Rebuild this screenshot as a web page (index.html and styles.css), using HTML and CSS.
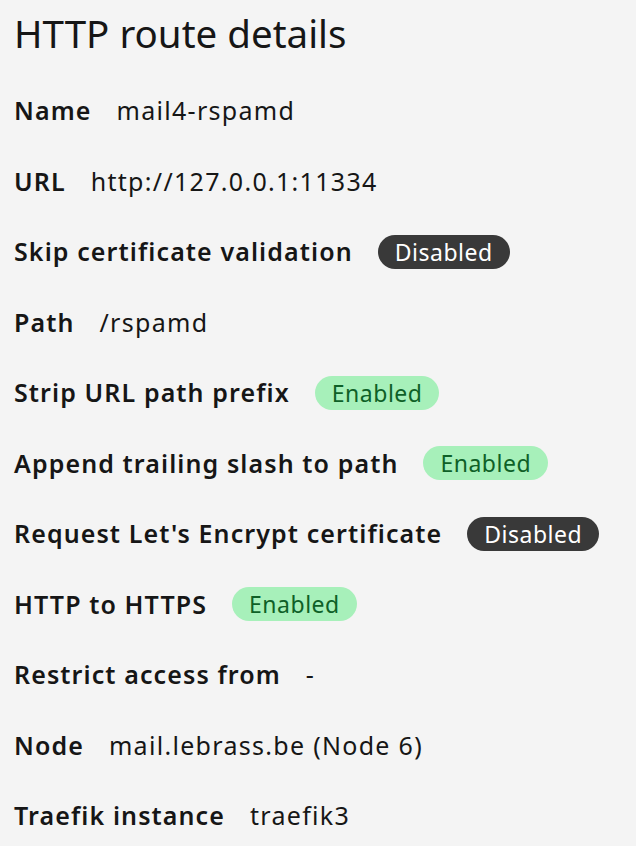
FILE: index.html
```html
<!DOCTYPE html>
<html>
<head>
<meta charset="utf-8">
<link rel="stylesheet" href="styles.css">
</head>
<body>
<main class="page">
  <h1 class="title">HTTP route details</h1>
  <dl class="details">
    <div class="row"><dt class="label">Name</dt><dd class="value">mail4-rspamd</dd></div>
    <div class="row"><dt class="label">URL</dt><dd class="value">http://127.0.0.1:11334</dd></div>
    <div class="row"><dt class="label">Skip certificate validation</dt><dd class="value"><span class="tag tag-off">Disabled</span></dd></div>
    <div class="row"><dt class="label">Path</dt><dd class="value">/rspamd</dd></div>
    <div class="row"><dt class="label">Strip URL path prefix</dt><dd class="value"><span class="tag tag-on">Enabled</span></dd></div>
    <div class="row"><dt class="label">Append trailing slash to path</dt><dd class="value"><span class="tag tag-on">Enabled</span></dd></div>
    <div class="row"><dt class="label">Request Let's Encrypt certificate</dt><dd class="value"><span class="tag tag-off">Disabled</span></dd></div>
    <div class="row"><dt class="label">HTTP to HTTPS</dt><dd class="value"><span class="tag tag-on">Enabled</span></dd></div>
    <div class="row"><dt class="label">Restrict access from</dt><dd class="value">-</dd></div>
    <div class="row"><dt class="label">Node</dt><dd class="value">mail.lebrass.be (Node 6)</dd></div>
    <div class="row"><dt class="label">Traefik instance</dt><dd class="value">traefik3</dd></div>
  </dl>
</main>
</body>
</html>
```
FILE: styles.css
```css
html, body {
  margin: 0;
  padding: 0;
  background: #f4f4f4;
}
body {
  font-family: "Noto Sans", "Open Sans", sans-serif;
  color: #161616;
}
.page {
  padding: 8px 14px 0 14px;
}
.title {
  margin: 0;
  font-size: 38.5px;
  font-weight: 400;
  line-height: 50px;
  letter-spacing: 0;
}
.details {
  margin: 35px 0 0 0;
  display: flex;
  flex-direction: column;
  gap: 36.5px;
}
.row {
  display: flex;
  align-items: center;
  height: 34px;
  gap: 25px;
}
.label {
  margin: 0;
  font-size: 25px;
  font-weight: 600;
  letter-spacing: 1.1px;
}
.value {
  margin: 0;
  font-size: 25px;
  font-weight: 400;
  letter-spacing: 1.3px;
}
.tag {
  display: inline-flex;
  align-items: center;
  height: 34px;
  padding: 0 17px;
  border-radius: 17px;
  font-size: 23px;
  letter-spacing: 0.5px;
  box-sizing: border-box;
}
.tag-off {
  background: #393939;
  color: #ffffff;
}
.tag-on {
  background: #a7f0ba;
  color: #0e6027;
}
```
